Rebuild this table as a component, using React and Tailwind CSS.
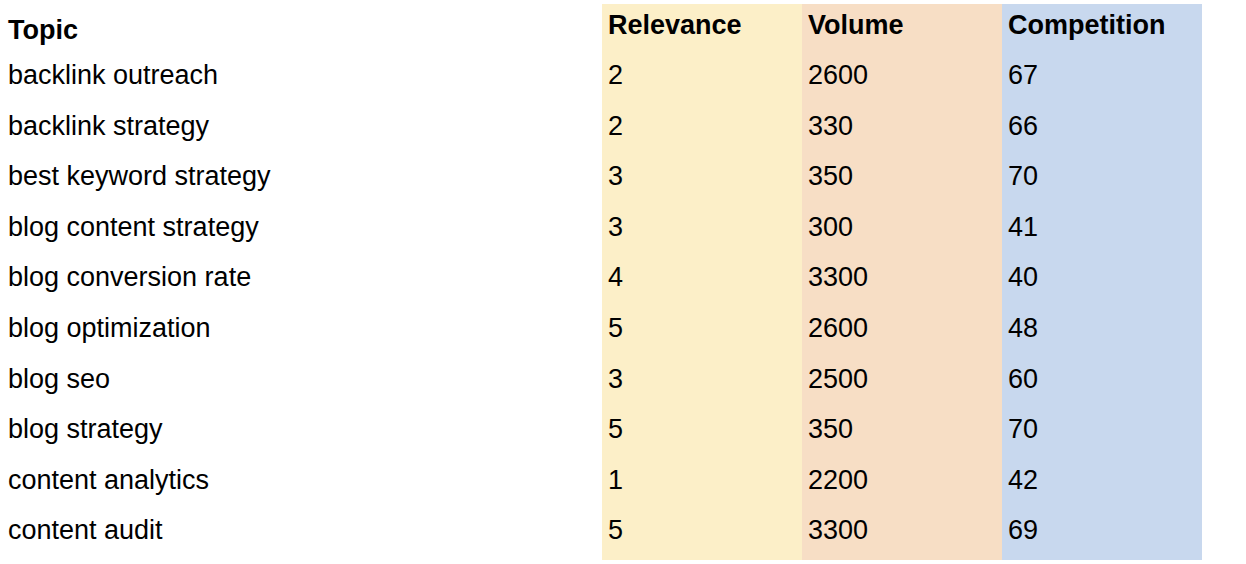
import React from 'react';

const rows = [
  ['backlink outreach', 2, 2600, 67],
  ['backlink strategy', 2, 330, 66],
  ['best keyword strategy', 3, 350, 70],
  ['blog content strategy', 3, 300, 41],
  ['blog conversion rate', 4, 3300, 40],
  ['blog optimization', 5, 2600, 48],
  ['blog seo', 3, 2500, 60],
  ['blog strategy', 5, 350, 70],
  ['content analytics', 1, 2200, 42],
  ['content audit', 5, 3300, 69],
];

const cols = [
  { title: 'Relevance', idx: 1, bg: 'bg-[#fcefc8]' },
  { title: 'Volume', idx: 2, bg: 'bg-[#f7dec5]' },
  { title: 'Competition', idx: 3, bg: 'bg-[#c8d8ee]' },
];

export default function App() {
  return (
    <div className="w-[1246px] h-[564px] bg-white text-black flex font-['Liberation_Sans',Arial,sans-serif] text-[27px]">
      {/* Topic column */}
      <div className="w-[602px] flex flex-col pl-[8px]">
        <div className="h-[50px] pt-[10px] leading-[40px] font-bold">Topic</div>
        {rows.map((r) => (
          <div key={r[0]} className="h-[50.6px] leading-[50.6px] whitespace-nowrap">{r[0]}</div>
        ))}
      </div>

      {cols.map((c) => (
        <div key={c.title} className={`w-[200px] mt-[4px] mb-[4px] flex flex-col pl-[6px] ${c.bg}`}>
          <div className="h-[46px] leading-[42px] font-bold">{c.title}</div>
          {rows.map((r) => (
            <div key={r[0]} className="h-[50.6px] leading-[50.6px]">{r[c.idx]}</div>
          ))}
        </div>
      ))}
    </div>
  );
}
